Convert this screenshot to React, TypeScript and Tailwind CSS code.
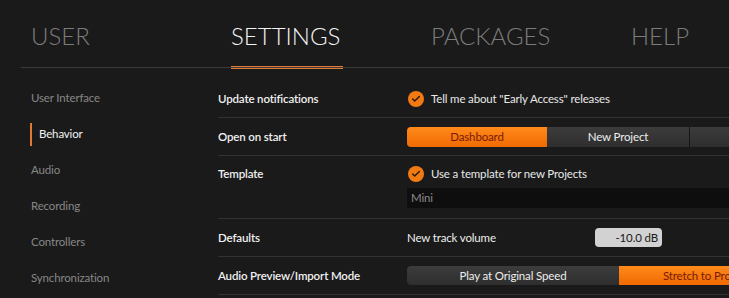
import { Check } from "lucide-react";

const tabs = ["USER", "SETTINGS", "PACKAGES", "HELP"];
const sections = ["User Interface", "Behavior", "Audio", "Recording", "Controllers", "Synchronization"];

function Tick({ label }: { label: string }) {
  return (
    <div className="flex items-center gap-[7px] h-[18px]">
      <span className="w-[16px] h-[16px] rounded-full bg-[#f27a12] flex items-center justify-center">
        <Check className="w-[10px] h-[10px] text-[#2a1a0a]" strokeWidth={3.5} />
      </span>
      <span className="text-[#e8e8e8]">{label}</span>
    </div>
  );
}

function Row({
  label,
  children,
  top = false,
}: {
  label: string;
  children?: React.ReactNode;
  top?: boolean;
}) {
  return (
    <div className="flex border-b border-[#333]">
      <div
        className={`w-[189px] shrink-0 font-semibold text-[#f0f0f0] flex ${
          top ? "items-start pt-[9px] leading-[18px]" : "items-center leading-[37px]"
        }`}
      >
        {label}
      </div>
      <div className="flex-1 min-w-0">{children}</div>
    </div>
  );
}

export default function App() {
  return (
    <div
      className="w-[729px] h-[298px] overflow-hidden bg-[#1a1a1a] text-[11.5px] tracking-[-0.15px]"
      style={{ fontFamily: "Lato, 'Open Sans', sans-serif" }}
    >
      <div className="relative h-[69px] pl-[31px] flex tracking-normal">
        {tabs.map((t) => (
          <div key={t} className="w-[200px] shrink-0 pt-[20px]">
            <span
              className={`relative inline-block text-[24px] font-light leading-[32px] ${
                t === "SETTINGS" ? "text-[#f4f4f4]" : "text-[#7c7c7c]"
              }`}
            >
              {t}
              {t === "SETTINGS" && (
                <span className="absolute left-0 right-[-3px] top-[46px] h-[3px] bg-[#e07a36]" />
              )}
            </span>
          </div>
        ))}
        <div className="absolute left-[21px] right-0 top-[67px] h-px bg-[#3a3a3a]" />
      </div>

      <div className="flex pt-[11px]">
        <div className="w-[218px] shrink-0 pl-[30px]">
          {sections.map((s) => (
            <div key={s} className="h-[36px] flex items-center">
              {s === "Behavior" ? (
                <div className="flex items-center h-[23px] border-l-[2px] border-[#e07a36] pl-[7px] text-[#f2f2f2]">
                  {s}
                </div>
              ) : (
                <span className="pl-[1px] text-[#878787]">{s}</span>
              )}
            </div>
          ))}
        </div>

        <div className="flex-1 min-w-0">
          <Row label="Update notifications">
            <div className="h-[37px] flex items-center pl-[1px]">
              <Tick label={'Tell me about "Early Access" releases'} />
            </div>
          </Row>

          <Row label="Open on start">
            <div className="h-[37px] flex items-center">
              <div className="flex w-full h-[20px] rounded-l-[4px] overflow-hidden">
                <div className="w-[140px] shrink-0 flex items-center justify-center bg-gradient-to-b from-[#ff8a1a] to-[#f06a00] text-[#7a1a05]">
                  Dashboard
                </div>
                <div className="w-[143px] shrink-0 flex items-center justify-center bg-gradient-to-b from-[#3c3c3c] to-[#2e2e2e] text-[#eeeeee] border-r border-[#151515]">
                  New Project
                </div>
                <div className="flex-1 bg-gradient-to-b from-[#3c3c3c] to-[#2e2e2e]" />
              </div>
            </div>
          </Row>

          <Row label="Template" top>
            <div className="pt-[9px] pb-[10px]">
              <div className="pl-[1px]">
                <Tick label="Use a template for new Projects" />
              </div>
              <div className="mt-[5px] h-[20px] bg-[#0e0e0e] text-[#8a8a8a] flex items-center pl-[4px]">Mini</div>
            </div>
          </Row>

          <Row label="Defaults">
            <div className="h-[37px] flex items-center">
              <span className="w-[188px] text-[#eeeeee]">New track volume</span>
              <div className="w-[67px] h-[19px] rounded-[4px] bg-[#d2d2d2] text-[#1a1a1a] flex items-center justify-end pr-[4px]">
                -10.0 dB
              </div>
            </div>
          </Row>

          <Row label="Audio Preview/Import Mode">
            <div className="h-[37px] flex items-center">
              <div className="flex w-full h-[19px] rounded-l-[4px] overflow-hidden">
                <div className="w-[212px] shrink-0 flex items-center justify-center bg-gradient-to-b from-[#3c3c3c] to-[#2e2e2e] text-[#eeeeee]">
                  Play at Original Speed
                </div>
                <div className="flex-1 min-w-0 flex items-center bg-gradient-to-b from-[#ff8a1a] to-[#f06a00] text-[#7a1a05] whitespace-nowrap overflow-hidden pl-[44px]">
                  Stretch to Project Tempo
                </div>
              </div>
            </div>
          </Row>
        </div>
      </div>
    </div>
  );
}
